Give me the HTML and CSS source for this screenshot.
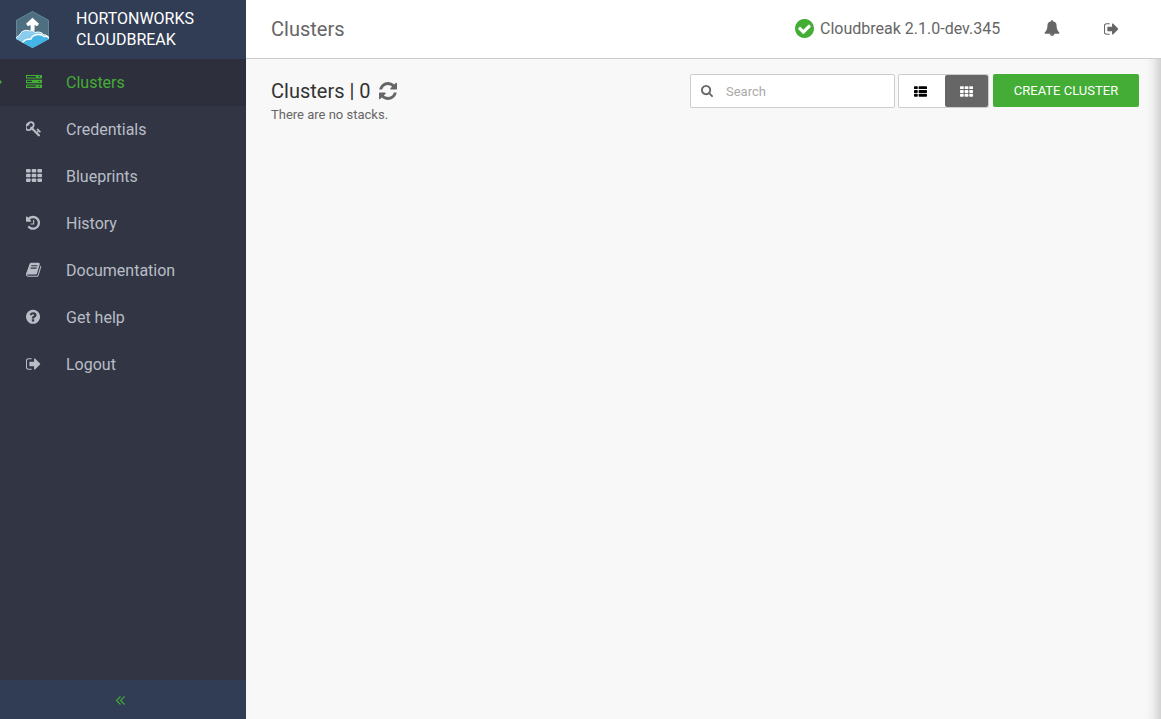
FILE: index.html
```html
<!DOCTYPE html>
<html lang="en">
<head>
<meta charset="utf-8">
<title>Cloudbreak</title>
<link rel="stylesheet" href="styles.css">
</head>
<body>
<svg class="sprite" aria-hidden="true">
  <symbol id="server" viewBox="0 0 16 13"><path fill-rule="evenodd" d="M0 0h16v3.6H0zM1 1.1v1.3h9V1.1zM12.6 1.1v1.2h1.3V1.1zM0 4.7h16v3.6H0zM1 5.8v1.3h5V5.8zM12.6 5.9v1.2h1.3V5.9zM0 9.4h16V13H0zM1 10.5v1.3h9v-1.3zM12.6 10.6v1.2h1.3v-1.2z"/></symbol>
  <symbol id="key" viewBox="120 100 1680 1680"><path d="M832 512q0-80-56-136t-136-56-136 56-56 136q0 42 19 83-41-19-83-19-80 0-136 56t-56 136 56 136 136 56 136-56 56-136q0-42-19-83 41 19 83 19 80 0 136-56t56-136zm851 704q0 17-49 66t-66 49q-9 0-28.500-16t-36.500-33-38.500-40-24.500-26l-96 96 220 220q28 28 28 68 0 42-39 81t-81 39q-40 0-68-28l-671-671q-176 131-365 131-163 0-265.500-102.500t-102.500-265.500q0-160 95-313t248-248 313-95q163 0 265.500 102.500t102.500 265.500q0 189-131 365l355 355 96-96q-3-3-26-24.500t-40-38.500-33-36.500-16-28.500q0-17 49-66t66-49q13 0 23 10 6 6 46 44.500t82 79.500 86.500 86 73 78 28.500 41z"/></symbol>
  <symbol id="th" viewBox="0 0 16 13"><rect width="4.600" height="3.500" rx=".8"/><rect x="5.700" width="4.600" height="3.500" rx=".8"/><rect x="11.400" width="4.600" height="3.500" rx=".8"/><rect y="4.700" width="4.600" height="3.500" rx=".8"/><rect x="5.700" y="4.700" width="4.600" height="3.500" rx=".8"/><rect x="11.400" y="4.700" width="4.600" height="3.500" rx=".8"/><rect y="9.400" width="4.600" height="3.500" rx=".8"/><rect x="5.700" y="9.400" width="4.600" height="3.500" rx=".8"/><rect x="11.400" y="9.400" width="4.600" height="3.500" rx=".8"/></symbol>
  <symbol id="th-list" viewBox="0 0 16 13"><rect width="4.600" height="3.500" rx=".8"/><rect x="5.700" width="10.300" height="3.500" rx=".8"/><rect y="4.700" width="4.600" height="3.500" rx=".8"/><rect x="5.700" y="4.700" width="10.300" height="3.500" rx=".8"/><rect y="9.400" width="4.600" height="3.500" rx=".8"/><rect x="5.700" y="9.400" width="10.300" height="3.500" rx=".8"/></symbol>
  <symbol id="history" viewBox="128 40 1750 1750"><path d="M1664 896q0 156-61 298t-164 245-245 164-298 61q-172 0-327-72.500t-264-204.500q-7-10-6.500-22.500t8.500-20.500l137-138q10-9 25-9 16 2 23 12 73 95 179 147t225 52q104 0 198.500-40.500t163.500-109.500 109.500-163.500 40.500-198.500-40.500-198.500-109.500-163.500-163.500-109.500-198.500-40.500q-98 0-188 35.500t-160 101.500l137 138q31 30 14 69-17 40-59 40h-448q-26 0-45-19t-19-45v-448q0-42 40-59 39-17 69 14l130 129q107-101 244.500-156.500t284.500-55.500q156 0 298 61t245 164 164 245 61 298zm-640-288v448q0 14-9 23t-23 9h-320q-14 0-23-9t-9-23v-64q0-14 9-23t23-9h224v-352q0-14 9-23t23-9h64q14 0 23 9t9 23z"/></symbol>
  <symbol id="book" viewBox="64 40 1750 1750"><path d="M1703 478q40 57 18 129l-275 906q-19 64-76.500 107.500t-122.500 43.500h-923q-77 0-148.500-53.500t-99.500-131.500q-24-67-2-127 0-4 3-27t4-37q1-8-3-21.500t-3-19.500q2-11 8-21t16.500-23.500 16.500-23.500q23-38 45-91.500t30-91.500q3-10 .5-30t-.5-28q3-11 17-28t17-23q21-36 42-92t25-90q1-9-2.500-32t.5-28q4-13 22-30.500t22-22.500q19-26 42.500-84.500t27.500-96.500q1-8-3-25.500t-2-26.500q2-8 9-18t18-23 17-21q8-12 16.500-30.500t15-35 16-36 19.500-32 26.500-23.500 36-11.500 47.500 5.500l-1 3q38-9 51-9h761q74 0 114 56t18 130l-274 906q-36 119-71.500 153.500t-128.500 34.500h-869q-27 0-38 15-11 16-1 43 24 70 144 70h923q29 0 56-15.500t35-41.500l300-987q7-22 5-57 38 15 59 43zm-1064 2q-4 13 2 22.500t20 9.500h608q13 0 25.500-9.500t16.500-22.500l21-64q4-13-2-22.500t-20-9.500h-608q-13 0-25.500 9.500t-16.500 22.500zm-83 256q-4 13 2 22.500t20 9.500h608q13 0 25.500-9.500t16.500-22.500l21-64q4-13-2-22.500t-20-9.500h-608q-13 0-25.500 9.500t-16.500 22.500z"/></symbol>
  <symbol id="help" viewBox="128 40 1750 1750"><path d="M1024 1376v-192q0-14-9-23t-23-9h-192q-14 0-23 9t-9 23v192q0 14 9 23t23 9h192q14 0 23-9t9-23zm256-672q0-88-55.500-163t-138.500-116-170-41q-243 0-371 213-15 24 8 42l132 100q7 6 19 6 16 0 25-12 53-68 86-92 34-24 86-24 48 0 85.500 26t37.500 59q0 38-20 61t-68 45q-63 28-115.500 86.500t-52.500 125.500v36q0 14 9 23t23 9h192q14 0 23-9t9-23q0-19 21.500-49.500t54.500-49.500q32-18 49-28.500t46-35 44.500-48 28-60.500 12.500-81zm384 192q0 209-103 385.500t-279.500 279.500-385.500 103-385.500-103-279.500-279.500-103-385.500 103-385.500 279.500-279.500 385.500-103 385.500 103 279.500 279.500 103 385.500z"/></symbol>
  <symbol id="signout" viewBox="80 20 1750 1750"><path d="M704 1440q0 4 1 20t.5 26.500-3 23.500-10 19.500-20.500 6.500h-320q-119 0-203.500-84.500t-84.500-203.500v-704q0-119 84.500-203.500t203.500-84.500h320q13 0 22.500 9.500t9.500 22.500q0 4 1 20t.5 26.500-3 23.500-10 19.500-20.500 6.500h-320q-66 0-113 47t-47 113v704q0 66 47 113t113 47h312l11.500 1 11.500 3 8 5.500 7 9 2 13.500zm928-544q0 26-19 45l-544 544q-19 19-45 19t-45-19-19-45v-288h-448q-26 0-45-19t-19-45v-384q0-26 19-45t45-19h448v-288q0-26 19-45t45-19 45 19l544 544q19 19 19 45z"/></symbol>
  <symbol id="check" viewBox="128 128 1536 1536"><path d="M1412 734q0-28-18-46l-91-90q-19-19-45-19t-45 19l-408 407-226-226q-19-19-45-19t-45 19l-91 90q-18 18-18 46 0 27 18 45l362 362q19 19 45 19 27 0 46-19l543-543q18-18 18-45zm252 162q0 209-103 385.500t-279.500 279.500-385.500 103-385.500-103-279.500-279.500-103-385.500 103-385.500 279.500-279.500 385.500-103 385.500 103 279.500 279.500 103 385.500z"/></symbol>
  <symbol id="bell" viewBox="0 0 1792 1792"><path d="M912 1696q0-16-16-16-59 0-101.500-42.500t-42.500-101.500q0-16-16-16t-16 16q0 73 51.500 124.500t124.500 51.500q16 0 16-16zm816-288q0 52-38 90t-90 38h-448q0 106-75 181t-181 75-181-75-75-181h-448q-52 0-90-38t-38-90q50-42 91-88t85-119.500 74.500-158.500 50-206 19.500-260q0-152 117-282.500t307-158.500q-8-19-8-39 0-40 28-68t68-28 68 28 28 68q0 20-8 39 190 28 307 158.500t117 282.500q0 139 19.500 260t50 206 74.500 158.500 85 119.500 91 88z"/></symbol>
  <symbol id="refresh" viewBox="128 128 1536 1536"><path d="M1639 1056q0 5-1 7-64 268-268 434.500t-478 166.500q-146 0-282.500-55t-243.500-157l-129 129q-19 19-45 19t-45-19-19-45v-448q0-26 19-45t45-19h448q26 0 45 19t19 45-19 45l-137 137q71 66 161 102t187 36q134 0 250-65t186-179q11-17 53-117 8-23 30-23h192q13 0 22.500 9.500t9.500 22.500zm25-800v448q0 26-19 45t-45 19h-448q-26 0-45-19t-19-45 19-45l138-138q-148-137-349-137-134 0-250 65t-186 179q-11 17-53 117-8 23-30 23h-199q-13 0-22.500-9.500t-9.500-22.500v-7q65-268 270-434.500t480-166.500q146 0 284 55.500t245 156.500l130-129q19-19 45-19t45 19 19 45z"/></symbol>
  <symbol id="search" viewBox="64 128 1664 1664"><path d="M1216 832q0-185-131.500-316.500t-316.500-131.500-316.500 131.500-131.500 316.500 131.500 316.500 316.500 131.500 316.500-131.500 131.500-316.500zm512 832q0 52-38 90t-90 38q-54 0-90-38l-343-342q-179 124-399 124-143 0-273.500-55.500t-225-150-150-225-55.500-273.500 55.500-273.500 150-225 225-150 273.500-55.500 273.500 55.500 225 150 150 225 55.500 273.500q0 220-124 399l343 343q37 37 37 90z"/></symbol>
</svg>
<div class="app">
  <aside class="sidebar">
    <div class="brand">
      <svg class="logo" viewBox="0 0 33 37">
        <clipPath id="hex"><path d="M16.500 0 33 9v19l-16.500 9L0 28V9z"/></clipPath>
        <g clip-path="url(#hex)">
          <path fill="#4d6f80" d="M0 0h33v37H0z"/>
          <path fill="none" stroke="#64859a" d="M16.500.5 32.500 9.200v18.600M.5 28V9.200L16.500.5"/>
          <path fill="#8acbf0" stroke="#fff" d="M-1 28.500c1-2 2.500-3.500 4.500-4 1-4 6-6.500 10-4.500 2-1 5 0 5.500 1.500 3-1 7-.5 8.500 2.200 2.500 0 5 1.500 6.500 4.300v12H-1z"/>
          <path fill="#42b4e6" stroke="#fff" stroke-width="1.300" d="M3 32c2 .2 3.500-.2 5-1.800 1-2 4-2.200 7-2.200 1-3 4-4.500 8-4.500 2.500 0 4 1 5 2.200 2-.7 4 0 6 2.300v12H3z"/>
          <path fill="#fff" d="m16.500 6.800 6.500 6-1.900 2.500-2.500-1.300v5.800h-4V14l-2.700 1.300L10 12.800z"/>
        </g>
      </svg>
      <div class="brand-name">HORTONWORKS<br>CLOUDBREAK</div>
    </div>
    <nav class="menu">
      <a class="item active"><svg class="icon flat"><use href="#server"/></svg>Clusters</a>
      <a class="item"><svg class="icon"><use href="#key"/></svg>Credentials</a>
      <a class="item"><svg class="icon flat"><use href="#th"/></svg>Blueprints</a>
      <a class="item"><svg class="icon"><use href="#history"/></svg>History</a>
      <a class="item"><svg class="icon"><use href="#book"/></svg>Documentation</a>
      <a class="item"><svg class="icon"><use href="#help"/></svg>Get help</a>
      <a class="item"><svg class="icon"><use href="#signout"/></svg>Logout</a>
    </nav>
    <div class="collapse"><svg class="chevrons" viewBox="0 0 9 9"><path d="M4.500.5l-4 4 4 4M8.500.5l-4 4 4 4"/></svg></div>
  </aside>
  <div class="main">
    <header class="topbar">
      <div class="page-title">Clusters</div>
      <svg class="check"><use href="#check"/></svg>
      <div class="version">Cloudbreak 2.1.0-dev.345</div>
      <svg class="icon bell"><use href="#bell"/></svg>
      <svg class="icon exit"><use href="#signout"/></svg>
    </header>
    <main class="content">
      <div class="heading">
        <h1 class="title">Clusters | 0 <svg class="refresh"><use href="#refresh"/></svg></h1>
        <div class="note">There are no stacks.</div>
      </div>
      <div class="search"><svg class="search-icon"><use href="#search"/></svg><span>Search</span></div>
      <div class="views">
        <div class="view"><svg class="view-icon"><use href="#th-list"/></svg></div>
        <div class="view selected"><svg class="view-icon"><use href="#th"/></svg></div>
      </div>
      <div class="create">CREATE CLUSTER</div>
    </main>
  </div>
</div>
</body>
</html>
```
FILE: styles.css
```css
* { box-sizing: border-box; }
body { margin: 0; font-family: Roboto, sans-serif; font-size: 16px; color: #666; }
svg { fill: currentColor; flex: none; }
.sprite { display: none; }
.app { display: flex; height: 719px; overflow: hidden; }

.sidebar { width: 246px; flex: none; display: flex; flex-direction: column; background: #323544; color: #b8bec6; }
.brand { height: 59px; display: flex; align-items: flex-start; background: #313d54; color: #fff; padding-left: 16px; }
.logo { width: 33px; height: 37px; margin: 11px 27px 0 0; }
.brand-name { line-height: 21px; margin-top: 8px; }
.menu { flex: 1; }
.item { display: flex; align-items: center; height: 47px; padding-left: 26px; position: relative; }
.icon { width: 16px; height: 16px; margin-right: 24px; }
.icon.flat { height: 13px; }
.item .icon { margin-top: -1px; }
.item .icon.flat { margin-top: -2px; }
.item.active { background: #2e2f3c; color: #43ad35; }
.item.active::before { content: ""; position: absolute; left: 0; top: 21px; border: 2px solid transparent; border-left-color: #43ad35; border-right: 0; }
.collapse { height: 39px; display: flex; align-items: center; justify-content: center; background: #313d54; color: #43ad35; padding: 2px 5px 0 0; }
.chevrons { width: 9px; height: 9px; fill: none; stroke: currentColor; stroke-width: 1.1; }

.main { flex: 1; display: flex; flex-direction: column; background: #f8f8f8; }
.topbar { height: 59px; display: flex; align-items: center; background: #fff; border-bottom: 1px solid #ccc; padding: 0 41px 0 25px; }
.page-title { font-size: 20px; flex: 1; }
.check { width: 19px; height: 19px; color: #43ad35; margin: -1px 6px 0 0; }
.version { width: 180px; white-space: nowrap; margin-top: -1px; }
.icon.bell { margin: -2px 44px 0; }
.icon.exit { margin: -1px 0 0; }

.content { flex: 1; display: flex; align-items: flex-start; padding: 15px 22px 0 25px; box-shadow: inset -16px 0 14px -14px rgba(0, 0, 0, .25); }
.heading { flex: 1; }
.title { display: flex; align-items: center; gap: 8px; margin: 5px 0 0; font-size: 20px; font-weight: 400; line-height: 24px; color: #333; }
.refresh { width: 18px; height: 18px; color: #666; }
.note { font-size: 13px; line-height: 16px; margin-top: 4px; }
.search { width: 205px; height: 34px; display: flex; align-items: center; gap: 13px; padding-left: 10px; background: #fff; border: 1px solid #ccccd3; border-radius: 2px; font-size: 13px; color: #aaa; }
.search-icon { width: 12px; height: 12px; color: #666; }
.views { width: 91px; height: 34px; display: flex; margin: 0 4px 0 3px; background: #fff; border: 1px solid #ccccd3; border-radius: 2px; }
.view { width: 46px; display: flex; align-items: center; justify-content: center; color: #000; padding-right: 3px; }
.view.selected { width: 43px; background: #666; color: #fff; border-radius: 2px; padding: 0; }
.view-icon { width: 13px; height: 11px; }
.create { width: 146px; height: 33px; line-height: 33px; text-align: center; background: #43ad35; color: #fff; border-radius: 2px; font-size: 13px; }
```
